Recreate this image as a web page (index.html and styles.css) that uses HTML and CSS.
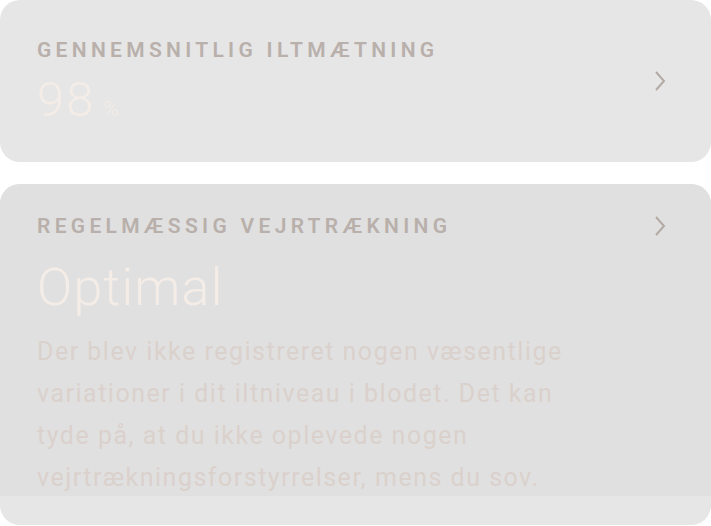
FILE: index.html
```html
<!DOCTYPE html>
<html lang="da">
<head>
<meta charset="utf-8">
<link rel="stylesheet" href="styles.css">
</head>
<body>
<div class="page">
  <section class="card card-avg">
    <div class="card-main">
      <h2 class="label">GENNEMSNITLIG ILTMÆTNING</h2>
      <div class="value"><span class="num">98</span><span class="unit">%</span></div>
    </div>
    <svg class="chev" width="14" height="22" viewBox="0 0 14 22"><path d="M3 2 L11 11 L3 20" fill="none" stroke="#b3aaa6" stroke-width="2"/></svg>
  </section>
  <section class="card card-breath">
    <div class="breath-inner">
      <div class="row">
        <h2 class="label">REGELMÆSSIG VEJRTRÆKNING</h2>
        <svg class="chev" width="14" height="22" viewBox="0 0 14 22"><path d="M3 2 L11 11 L3 20" fill="none" stroke="#b3aaa6" stroke-width="2"/></svg>
      </div>
      <div class="status">Optimal</div>
      <p class="desc">Der blev ikke registreret nogen væsentlige variationer i dit iltniveau i blodet. Det kan tyde på, at du ikke oplevede nogen vejrtrækningsforstyrrelser, mens du sov.</p>
    </div>
  </section>
</div>
</body>
</html>
```
FILE: styles.css
```css
* { box-sizing: border-box; }
html, body { margin: 0; padding: 0; background: #ffffff; }
body { font-family: Roboto, "Liberation Sans", sans-serif; width: 711px; height: 526px; overflow: hidden; }
.page { display: flex; flex-direction: column; gap: 22px; }
.card { border-radius: 20px; background: #e6e6e6; overflow: hidden; }
.card-avg { height: 162px; display: flex; align-items: center; padding: 0 44px 0 37px; }
.card-main { flex: 1; margin-top: 2px; }
.label { margin: 0; font-size: 21px; line-height: 24px; font-weight: 600; letter-spacing: 4.3px; color: #b9b0ab; }
.value { display: flex; align-items: baseline; margin-top: 12px; }
.num { font-size: 49px; line-height: 52px; font-weight: 300; letter-spacing: 2px; color: #f4ece7; }
.unit { font-size: 21px; font-weight: 300; color: #f4ece7; margin-left: 8px; }
.chev { display: block; flex: none; }
.card-breath { height: 341px; }
.breath-inner { background: #e0e0e0; padding: 30px 44px 8px 37px; height: 312px; }
.row { display: flex; align-items: center; justify-content: space-between; }
.status { font-size: 52px; line-height: 60px; font-weight: 300; letter-spacing: 1.2px; color: #f4ece7; margin-top: 20px; }
.desc { margin: 13px 0 0; width: 560px; font-size: 25px; line-height: 42px; letter-spacing: 1.5px; color: #dbd1cc; font-weight: 400; }
```
